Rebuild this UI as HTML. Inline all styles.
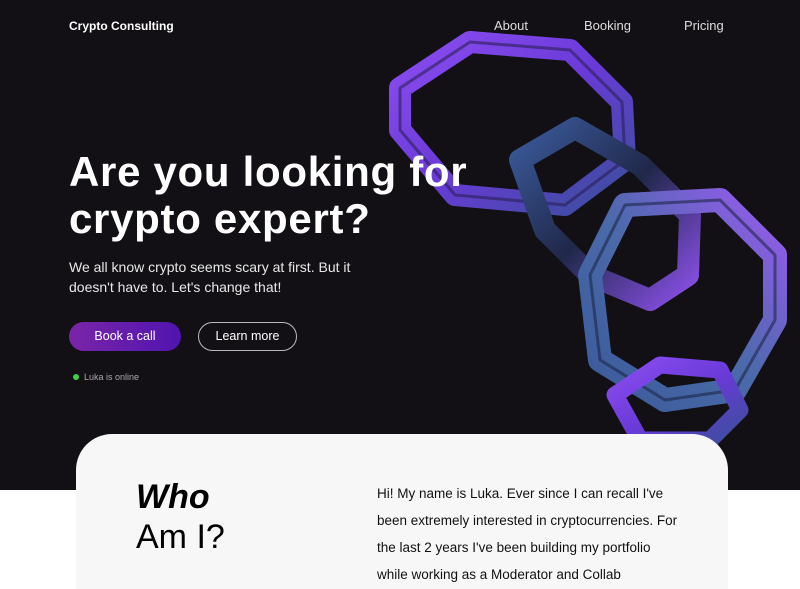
<!DOCTYPE html>
<html><head><style>
*{margin:0;padding:0;box-sizing:border-box}
html,body{width:800px;height:589px;overflow:hidden}
body{background:#fff;font-family:"Liberation Sans",sans-serif;position:relative}
.hero{position:absolute;left:0;top:0;width:800px;height:490px;background:#121014}
.t{position:absolute;color:#fff;white-space:nowrap}
</style></head><body>
<div class="hero"></div>
<svg style="position:absolute;left:0;top:0" width="800" height="490">
<defs>
<linearGradient id="g1" x1="0" y1="0" x2="1" y2="1"><stop offset="0" stop-color="#8a4cf0"/><stop offset=".5" stop-color="#6a3ad8"/><stop offset="1" stop-color="#3a4f9a"/></linearGradient>
<linearGradient id="g2" x1="0" y1="0" x2="1" y2="1"><stop offset="0" stop-color="#3a5a9a"/><stop offset=".5" stop-color="#20284a"/><stop offset="1" stop-color="#8a50e8"/></linearGradient>
<linearGradient id="g3" x1="1" y1="0" x2="0" y2="1"><stop offset="0" stop-color="#9a5af0"/><stop offset=".5" stop-color="#4a6aaa"/><stop offset="1" stop-color="#3a5a9a"/></linearGradient>
</defs>
<g fill="none" stroke-linejoin="round">
<polygon points="400,88 470,42 570,50 622,102 625,160 565,205 455,195 400,130" stroke="url(#g1)" stroke-width="22"/>
<polygon points="400,88 470,42 570,50 622,102 625,160 565,205 455,195 400,130" stroke="#2a1f55" stroke-width="3" opacity=".6"/>
<polygon points="520,160 575,128 640,165 690,215 688,275 650,300 590,275 545,230" stroke="url(#g2)" stroke-width="22"/>
<polygon points="590,275 625,205 720,200 775,255 775,320 735,390 665,400 600,360" stroke="url(#g3)" stroke-width="24"/>
<polygon points="590,275 625,205 720,200 775,255 775,320 735,390 665,400 600,360" stroke="#1d2748" stroke-width="3" opacity=".6"/>
<polygon points="615,395 660,365 720,370 740,410 710,440 640,440" stroke="url(#g1)" stroke-width="17"/>
</g>
</svg>
<div class="t" style="left:69px;top:19px;font-size:12px;font-weight:bold">Crypto Consulting</div>
<div class="t" style="left:494px;top:18px;font-size:13px;color:#ddd">About</div>
<div class="t" style="left:584px;top:18px;font-size:13px;color:#ddd">Booking</div>
<div class="t" style="left:684px;top:18px;font-size:13px;color:#ddd">Pricing</div>
<div class="t" style="left:69px;top:148px;font-size:42px;font-weight:bold;line-height:47px;letter-spacing:0.7px">Are you looking for<br>crypto expert?</div>
<div class="t" style="left:69px;top:257px;font-size:14px;line-height:20px;color:#e8e8e8">We all know crypto seems scary at first. But it<br>doesn't have to. Let's change that!</div>
<div class="t" style="left:69px;top:322px;width:112px;height:29px;border-radius:15px;background:linear-gradient(90deg,#7a25a8,#5014b0);font-size:12.5px;line-height:29px;text-align:center">Book a call</div>
<div class="t" style="left:198px;top:322px;width:99px;height:29px;border-radius:15px;border:1px solid #bbb;font-size:12.5px;line-height:27px;text-align:center">Learn more</div>
<div style="position:absolute;left:73px;top:374px;width:6px;height:6px;border-radius:50%;background:#4c4"></div>
<div class="t" style="left:84px;top:372px;font-size:9px;color:#aaa">Luka is online</div>
<div style="position:absolute;left:76px;top:434px;width:652px;height:155px;border-radius:36px 36px 0 0;background:#f7f7f7"></div>
<div class="t" style="left:136px;top:477px;font-size:34px;color:#000;line-height:40px"><b><i>Who</i></b><br>Am I?</div>
<div class="t" style="left:377px;top:480px;font-size:13.5px;line-height:27px;height:108px;overflow:hidden;color:#111">Hi! My name is Luka. Ever since I can recall I've<br>been extremely interested in cryptocurrencies. For<br>the last 2 years I've been building my portfolio<br>while working as a Moderator and Collab</div>
</body></html>
